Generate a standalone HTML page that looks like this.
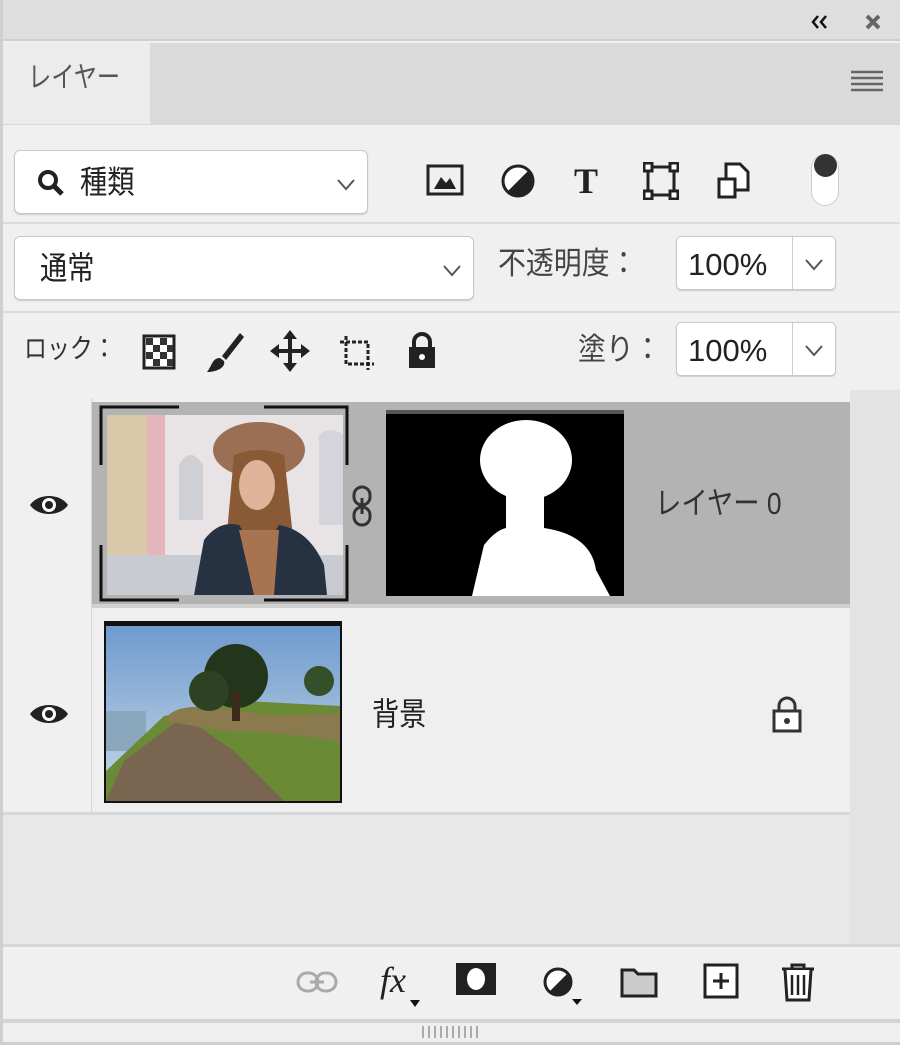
<!DOCTYPE html>
<html><head><meta charset="utf-8"><style>
*{margin:0;padding:0;box-sizing:border-box}
body{width:900px;height:1045px;overflow:hidden;background:#f0f0f0;font-family:"Liberation Sans","Noto Sans CJK JP",sans-serif;position:relative;color:#222}
.a{position:absolute}
.box{position:absolute;background:#fff;border:1px solid #c8c8c8;border-radius:6px;box-shadow:0 1px 1px #ccc}
.t{position:absolute;font-size:29px;line-height:1;white-space:nowrap}
</style></head><body>
<!-- top bar -->
<div class="a" style="left:0;top:0;width:900px;height:41px;background:#dedede;border-bottom:2px solid #cfcfcf"></div>
<svg class="a" style="left:810px;top:14px" width="20" height="16"><path d="M8 2L3 8L8 14M16 2L11 8L16 14" fill="none" stroke="#111" stroke-width="2.5"/></svg>
<svg class="a" style="left:865px;top:14px" width="16" height="16"><path d="M2 2L14 14M14 2L2 14" stroke="#666" stroke-width="4"/></svg>
<!-- tab row -->
<div class="a" style="left:0;top:43px;width:900px;height:81px;background:#dadada"></div>
<div class="a" style="left:0;top:43px;width:150px;height:81px;background:#ececec"></div>
<div class="t" style="left:28px;top:64px;font-size:29px;color:#555;transform:scaleX(0.8);transform-origin:left">レイヤー</div>
<svg class="a" style="left:851px;top:70px" width="32" height="22"><path d="M0 2H32M0 8H32M0 14H32M0 20H32" stroke="#666" stroke-width="2.5"/></svg>
<div class="a" style="left:0;top:124px;width:900px;height:1px;background:#d8d8d8"></div>
<!-- filter row -->
<div class="box" style="left:14px;top:150px;width:354px;height:64px"></div>
<svg class="a" style="left:36px;top:168px" width="32" height="30"><circle cx="12" cy="12" r="8" fill="none" stroke="#222" stroke-width="4"/><path d="M18 18L26 26" stroke="#222" stroke-width="5"/></svg>
<div class="t" style="left:80px;top:166px;font-size:32px;transform:scaleX(0.85);transform-origin:left">種類</div>
<svg class="a" style="left:336px;top:178px" width="20" height="14"><path d="M2 2L10 11L18 2" fill="none" stroke="#555" stroke-width="2"/></svg>
<svg class="a" style="left:426px;top:164px" width="38" height="32"><rect x="2" y="2" width="34" height="28" fill="none" stroke="#222" stroke-width="3"/><path d="M8 25L15 13L20 19L24 14L30 25Z" fill="#222"/></svg>
<svg class="a" style="left:500px;top:163px" width="36" height="36"><circle cx="18" cy="18" r="15" fill="#fff" stroke="#222" stroke-width="3"/><path d="M29 7A15 15 0 0 1 7 29Z" fill="#222"/></svg>
<div class="t" style="left:574px;top:163px;font-size:36px;font-weight:bold;font-family:'Liberation Serif',serif">T</div>
<svg class="a" style="left:643px;top:162px" width="36" height="38"><rect x="5" y="5" width="26" height="28" fill="none" stroke="#222" stroke-width="3"/><g fill="#fff" stroke="#222" stroke-width="3"><rect x="1" y="1" width="8" height="8"/><rect x="27" y="1" width="8" height="8"/><rect x="1" y="29" width="8" height="8"/><rect x="27" y="29" width="8" height="8"/></g></svg>
<svg class="a" style="left:716px;top:162px" width="36" height="38"><path d="M10 2H24L32 10V28H10Z" fill="#fff" stroke="#222" stroke-width="3"/><rect x="3" y="17" width="16" height="18" fill="#fff" stroke="#222" stroke-width="3"/></svg>
<div class="a" style="left:811px;top:154px;width:28px;height:52px;border-radius:14px;background:#fff;border:1px solid #ccc"></div>
<div class="a" style="left:814px;top:154px;width:23px;height:23px;border-radius:50%;background:#333"></div>
<div class="a" style="left:0;top:222px;width:900px;height:2px;background:#dcdcdc"></div>
<!-- blend row -->
<div class="box" style="left:14px;top:236px;width:460px;height:64px"></div>
<div class="t" style="left:40px;top:252px;font-size:32px;transform:scaleX(0.85);transform-origin:left">通常</div>
<svg class="a" style="left:442px;top:264px" width="20" height="14"><path d="M2 2L10 11L18 2" fill="none" stroke="#555" stroke-width="2"/></svg>
<div class="t" style="left:498px;top:248px;font-size:31px;color:#444;transform:scaleX(0.9);transform-origin:left">不透明度：</div>
<div class="box" style="left:676px;top:236px;width:160px;height:54px;border-radius:5px"></div>
<div class="a" style="left:792px;top:237px;width:1px;height:52px;background:#ccc"></div>
<div class="t" style="left:688px;top:249px;font-size:31px">100%</div>
<svg class="a" style="left:804px;top:258px" width="20" height="14"><path d="M2 2L10 11L18 2" fill="none" stroke="#555" stroke-width="2"/></svg>
<div class="a" style="left:0;top:311px;width:900px;height:2px;background:#dcdcdc"></div>
<!-- lock row -->
<div class="t" style="left:24px;top:336px;font-size:27px;color:#333;transform:scaleX(0.85);transform-origin:left">ロック：</div>
<svg class="a" style="left:142px;top:334px" width="34" height="36"><rect x="2" y="2" width="30" height="32" fill="#fff" stroke="#222" stroke-width="3"/><g fill="#333"><rect x="4" y="4" width="7" height="7"/><rect x="18" y="4" width="7" height="7"/><rect x="11" y="11" width="7" height="7"/><rect x="25" y="11" width="6" height="7"/><rect x="4" y="18" width="7" height="7"/><rect x="18" y="18" width="7" height="7"/><rect x="11" y="25" width="7" height="7"/><rect x="25" y="25" width="6" height="7"/></g></svg>
<svg class="a" style="left:204px;top:330px" width="40" height="44"><path d="M36 3L18 26L22 30L40 7Z" fill="#222"/><path d="M16 28C8 28 8 36 3 42C12 42 22 38 20 31Z" fill="#222"/></svg>
<svg class="a" style="left:270px;top:330px" width="40" height="42"><path d="M20 3V39M3 21H37" stroke="#222" stroke-width="4"/><path d="M20 0L13 9H27ZM20 42L13 33H27ZM0 21L9 14V28ZM40 21L31 14V28Z" fill="#222"/></svg>
<svg class="a" style="left:336px;top:334px" width="42" height="40"><path d="M4 8H32V36M10 2V30H38" fill="none" stroke="#222" stroke-width="3" stroke-dasharray="4 2"/></svg>
<svg class="a" style="left:406px;top:331px" width="32" height="38"><path d="M8 17V11A8 8 0 0 1 24 11V17" fill="none" stroke="#222" stroke-width="4"/><rect x="3" y="16" width="26" height="21" fill="#222"/><circle cx="16" cy="26" r="3" fill="#fff"/></svg>
<div class="t" style="left:578px;top:334px;font-size:31px;color:#444;transform:scaleX(0.9);transform-origin:left">塗り：</div>
<div class="box" style="left:676px;top:322px;width:160px;height:54px;border-radius:5px"></div>
<div class="a" style="left:792px;top:323px;width:1px;height:52px;background:#ccc"></div>
<div class="t" style="left:688px;top:335px;font-size:31px">100%</div>
<svg class="a" style="left:804px;top:344px" width="20" height="14"><path d="M2 2L10 11L18 2" fill="none" stroke="#555" stroke-width="2"/></svg>
<!-- layers area -->
<div class="a" style="left:0;top:390px;width:900px;height:556px;background:#e8e8e8"></div>
<div class="a" style="left:850px;top:390px;width:50px;height:556px;background:#e3e3e3"></div>
<div class="a" style="left:0;top:390px;width:850px;height:12px;background:#f0f0f0"></div>
<div class="a" style="left:0;top:398px;width:92px;height:415px;background:#f0f0f0"></div>
<div class="a" style="left:92px;top:402px;width:758px;height:202px;background:#b3b3b3"></div>
<div class="a" style="left:92px;top:604px;width:758px;height:4px;background:#d0d0d0"></div>
<div class="a" style="left:92px;top:608px;width:758px;height:204px;background:#efefef"></div>
<div class="a" style="left:0;top:812px;width:850px;height:3px;background:#d8d8d8"></div>
<div class="a" style="left:91px;top:398px;width:1px;height:414px;background:#d4d4d4"></div>
<!-- eyes -->
<svg class="a" style="left:28px;top:492px" width="42" height="26"><path d="M2 13C10 1 32 1 40 13C32 25 10 25 2 13Z" fill="#222"/><circle cx="21" cy="13" r="7" fill="#fff"/><circle cx="21" cy="13" r="4" fill="#222"/></svg>
<svg class="a" style="left:28px;top:701px" width="42" height="26"><path d="M2 13C10 1 32 1 40 13C32 25 10 25 2 13Z" fill="#222"/><circle cx="21" cy="13" r="7" fill="#fff"/><circle cx="21" cy="13" r="4" fill="#222"/></svg>
<!-- thumb 1 -->
<svg class="a" style="left:99px;top:405px" width="250" height="197">
<rect x="2" y="2" width="246" height="193" fill="none" stroke="#111" stroke-width="3"/>
<rect x="80" y="0" width="85" height="6" fill="#b3b3b3"/><rect x="80" y="192" width="85" height="6" fill="#b3b3b3"/>
<rect x="0" y="60" width="6" height="80" fill="#b3b3b3"/><rect x="244" y="60" width="6" height="80" fill="#b3b3b3"/>
<rect x="8" y="10" width="236" height="180" fill="#e8e4e6"/>
<rect x="8" y="10" width="40" height="150" fill="#d9c9a8"/>
<rect x="48" y="10" width="18" height="150" fill="#e4b6bc"/>
<rect x="8" y="150" width="236" height="40" fill="#c9cbd2"/>
<path d="M80 60Q92 40 104 60V115H80Z" fill="#cfcfd6"/>
<path d="M220 30Q232 20 244 30V120H220Z" fill="#d4d4da"/>
<ellipse cx="160" cy="45" rx="46" ry="28" fill="#9b6f53"/>
<path d="M135 50Q160 40 185 50L196 150H126Z" fill="#8a5a36"/>
<ellipse cx="158" cy="80" rx="18" ry="25" fill="#e0b49a"/>
<path d="M95 190L105 135Q120 115 140 120L160 150L180 120Q210 125 225 160L228 190Z" fill="#263142"/>
<path d="M140 125L155 190H175L180 125Z" fill="#a87450"/>
</svg>
<!-- link -->
<svg class="a" style="left:350px;top:484px" width="24" height="44"><rect x="4" y="3" width="16" height="18" rx="8" fill="none" stroke="#333" stroke-width="3"/><rect x="4" y="23" width="16" height="18" rx="8" fill="none" stroke="#333" stroke-width="3"/><path d="M12 14V30" stroke="#333" stroke-width="3"/></svg>
<!-- mask -->
<svg class="a" style="left:386px;top:410px" width="238" height="186">
<rect x="0" y="0" width="238" height="186" fill="#000"/><rect x="0" y="0" width="238" height="4" fill="#555"/>
<ellipse cx="140" cy="50" rx="46" ry="40" fill="#fff"/>
<path d="M120 80H158V118Q205 125 210 160L224 186H86L98 135Q110 120 120 118Z" fill="#fff"/>
</svg>
<div class="t" style="left:655px;top:488px;font-size:31px;color:#333;transform:scaleX(0.85);transform-origin:left">レイヤー 0</div>
<!-- thumb 2 -->
<svg class="a" style="left:104px;top:621px" width="238" height="182">
<rect x="0" y="0" width="238" height="182" fill="#111"/>
<defs><linearGradient id="s" x1="0" y1="0" x2="0" y2="1"><stop offset="0" stop-color="#6f9bcf"/><stop offset="1" stop-color="#c9d8e6"/></linearGradient></defs>
<rect x="2" y="5" width="234" height="175" fill="url(#s)"/>
<rect x="2" y="90" width="40" height="40" fill="#8aa7bd"/>
<path d="M2 180L2 150L60 95L140 80L236 85V180Z" fill="#6a8a36"/>
<path d="M2 180L20 140L80 95L130 130L180 180Z" fill="#7a6650"/>
<path d="M60 100Q70 80 120 88L170 95L236 92V120Q170 110 120 110Z" fill="#8a7a4e"/>
<circle cx="132" cy="55" r="32" fill="#23361c"/>
<circle cx="105" cy="70" r="20" fill="#2d4222"/>
<circle cx="215" cy="60" r="15" fill="#34502a"/>
<rect x="128" y="70" width="8" height="30" fill="#3a2a1a"/>
</svg>
<div class="t" style="left:372px;top:698px;font-size:32px;transform:scaleX(0.85);transform-origin:left">背景</div>
<svg class="a" style="left:770px;top:695px" width="34" height="38"><path d="M9 17V11A8 8 0 0 1 25 11V17" fill="none" stroke="#333" stroke-width="3"/><rect x="4" y="16" width="26" height="20" fill="#fff" stroke="#333" stroke-width="3"/><circle cx="17" cy="26" r="3" fill="#333"/></svg>
<!-- bottom bar -->
<div class="a" style="left:0;top:944px;width:900px;height:3px;background:#d6d6d6"></div>
<div class="a" style="left:0;top:947px;width:900px;height:73px;background:#f0f0f0"></div>
<svg class="a" style="left:296px;top:970px" width="44" height="24"><rect x="2" y="3" width="20" height="18" rx="9" fill="none" stroke="#aaa" stroke-width="3"/><rect x="20" y="3" width="20" height="18" rx="9" fill="none" stroke="#aaa" stroke-width="3"/><path d="M14 12H28" stroke="#aaa" stroke-width="3"/></svg>
<div class="t" style="left:380px;top:962px;font-size:36px;font-style:italic;font-family:'Liberation Serif',serif;color:#222">fx</div>
<svg class="a" style="left:410px;top:1000px" width="10" height="8"><path d="M0 0H10L5 7Z" fill="#111"/></svg>
<svg class="a" style="left:456px;top:963px" width="42" height="34"><rect x="0" y="0" width="40" height="32" fill="#222"/><ellipse cx="20" cy="16" rx="9" ry="11" fill="#fff"/></svg>
<svg class="a" style="left:542px;top:966px" width="40" height="40"><circle cx="16" cy="16" r="13" fill="#fff" stroke="#222" stroke-width="3"/><path d="M26 7A13 13 0 0 1 7 26Z" fill="#222"/><path d="M30 33H40L35 39Z" fill="#111"/></svg>
<svg class="a" style="left:620px;top:966px" width="38" height="32"><path d="M2 30V4H14L18 8H36V30Z" fill="#ccc" stroke="#222" stroke-width="3"/></svg>
<svg class="a" style="left:703px;top:963px" width="36" height="36"><rect x="2" y="2" width="32" height="32" fill="#fff" stroke="#222" stroke-width="3"/><path d="M18 10V26M10 18H26" stroke="#222" stroke-width="3"/></svg>
<svg class="a" style="left:780px;top:962px" width="36" height="40"><path d="M2 7H34M12 7V3H24V7" fill="none" stroke="#222" stroke-width="3"/><path d="M5 8L7 38H29L31 8" fill="#fff" stroke="#222" stroke-width="3"/><path d="M12 13V33M18 13V33M24 13V33" stroke="#222" stroke-width="2.5"/></svg>
<div class="a" style="left:0;top:1019px;width:900px;height:4px;background:#d4d4d4"></div>
<div class="a" style="left:0;top:1023px;width:900px;height:22px;background:#efefef"></div>
<div class="a" style="left:422px;top:1026px;width:58px;height:12px;background:repeating-linear-gradient(90deg,#aaa 0 2px,transparent 2px 6px)"></div>
<div class="a" style="left:0;top:0;width:3px;height:1045px;background:#cfcfcf"></div>
<div class="a" style="left:0;top:1042px;width:900px;height:3px;background:#cfcfcf"></div>
</body></html>
